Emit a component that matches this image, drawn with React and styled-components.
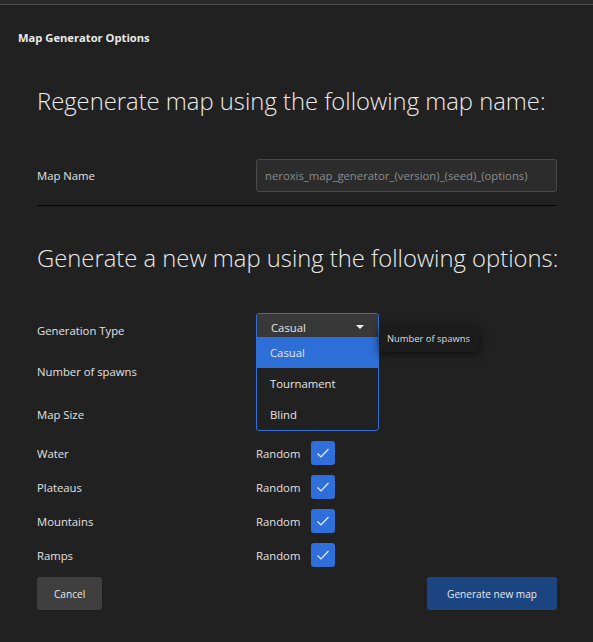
import React from "react";
import styled, { createGlobalStyle } from "styled-components";

const GlobalStyle = createGlobalStyle`
	html, body {
		margin: 0;
		padding: 0;
		background: #212121;
	}
	body {
		font-family: "Open Sans", "Noto Sans", sans-serif;
		color: #e6e6e6;
	}
`;

const Window = styled.div`
	width: 593px;
	height: 642px;
	background: #212121;
	overflow: hidden;
`;

const TopStrip = styled.div`
	height: 4px;
	background: #2b2b2b;
	border-bottom: 1px solid #505050;
`;

const DialogTitle = styled.h1`
	margin: 0;
	padding: 25px 0 0 18px;
	height: 37px;
	box-sizing: border-box;
	font-size: 11.2px;
	font-weight: 700;
	line-height: 16px;
	color: #eaeaea;
`;

const Content = styled.div`
	padding: 0 36px 0 37px;
	display: flex;
	flex-direction: column;
`;

const Heading = styled.h2`
	margin: 0;
	font-size: 23.8px;
	font-weight: 300;
	line-height: 32px;
	color: #ececec;
	padding-top: ${(p) => p.$top}px;
	white-space: nowrap;
`;

const Row = styled.div`
	display: grid;
	grid-template-columns: 219px 1fr;
	align-items: center;
	height: ${(p) => p.$h}px;
	margin-top: ${(p) => p.$mt || 0}px;
	position: relative;
`;

const Label = styled.span`
	font-size: 11.3px;
	color: #e2e2e2;
`;

const TextInput = styled.input`
	height: 33px;
	box-sizing: border-box;
	background: #2c2c2c;
	border: 1px solid #4a4a4a;
	border-radius: 3px;
	padding: 0 8px;
	font-family: inherit;
	font-size: 11.3px;
	color: #ddd;
	outline: none;
	&::placeholder {
		color: #8c8c8c;
	}
`;

const Separator = styled.hr`
	margin: 13px 0 0;
	border: none;
	border-top: 1px solid #050505;
`;

const Combo = styled.div`
	position: absolute;
	left: 219px;
	top: 0;
	width: 123px;
	box-sizing: border-box;
	border: 1px solid #2f6fd6;
	border-radius: 3px;
	background: #212121;
	overflow: hidden;
	z-index: 2;
`;

const ComboHead = styled.div`
	height: 23px;
	background: #383838;
	display: flex;
	align-items: center;
	justify-content: space-between;
	padding: 3px 14px 0 14px;
	box-sizing: border-box;
	font-size: 11.3px;
	color: #e6e6e6;
`;

const Caret = styled.span`
	width: 0;
	height: 0;
	border-left: 4px solid transparent;
	border-right: 4px solid transparent;
	border-top: 4px solid #f2f2f2;
`;

const Option = styled.div`
	height: 31px;
	display: flex;
	align-items: center;
	padding-left: 13px;
	font-size: 11.3px;
	color: #e6e6e6;
	background: ${(p) => (p.$active ? "#2d6fd6" : "transparent")};
`;

const Tooltip = styled.div`
	position: absolute;
	left: 342px;
	top: 13px;
	padding: 6px 9px 6px 8px;
	background: #1c1c1c;
	border-radius: 3px;
	font-size: 9.4px;
	line-height: 14px;
	color: #dedede;
	box-shadow: 0 2px 8px rgba(0, 0, 0, 0.6);
	white-space: nowrap;
	z-index: 3;
`;

const CheckCell = styled.div`
	display: flex;
	align-items: center;
	gap: 11px;
`;

const CheckBox = styled.span`
	width: 24px;
	height: 24px;
	border-radius: 3px;
	background: #2f6fdc;
	display: flex;
	align-items: center;
	justify-content: center;
`;

const Buttons = styled.div`
	display: flex;
	justify-content: space-between;
	padding-top: 5px;
`;

const Button = styled.button`
	height: 33px;
	border: none;
	border-radius: 3px;
	padding: 0 ${(p) => (p.$primary ? 20 : 17)}px;
	font-family: inherit;
	font-size: 10.1px;
	color: #e8e8e8;
	background: ${(p) => (p.$primary ? "#1b4581" : "#3f3f3f")};
`;

const Check = () => (
	<svg width="16" height="16" viewBox="0 0 16 16" fill="none">
		<path d="M2.5 8.5 L6 12 L13.5 4" stroke="#e8eefa" strokeWidth="1.2" />
	</svg>
);

const randomRows = ["Water", "Plateaus", "Mountains", "Ramps"];

export default function App() {
	return (
		<Window>
			<GlobalStyle />
			<TopStrip />
			<DialogTitle>Map Generator Options</DialogTitle>
			<Content>
				<Heading $top={43}>Regenerate map using the following map name:</Heading>
				<Row $h={33} $mt={42}>
					<Label>Map Name</Label>
					<TextInput placeholder="neroxis_map_generator_(version)_(seed)_(options)" />
				</Row>
				<Separator />
				<Heading $top={36}>Generate a new map using the following options:</Heading>
				<Row $h={34} $mt={39}>
					<Label>Generation Type</Label>
					<Combo>
						<ComboHead>
							Casual
							<Caret />
						</ComboHead>
						<Option $active>Casual</Option>
						<Option>Tournament</Option>
						<Option>Blind</Option>
					</Combo>
					<Tooltip>Number of spawns</Tooltip>
				</Row>
				<Row $h={42} $mt={3}>
					<Label>Number of spawns</Label>
				</Row>
				<Row $h={44}>
					<Label>Map Size</Label>
				</Row>
				{randomRows.map((name) => (
					<Row key={name} $h={34}>
						<Label>{name}</Label>
						<CheckCell>
							<Label>Random</Label>
							<CheckBox>
								<Check />
							</CheckBox>
						</CheckCell>
					</Row>
				))}
				<Buttons>
					<Button>Cancel</Button>
					<Button $primary>Generate new map</Button>
				</Buttons>
			</Content>
		</Window>
	);
}
